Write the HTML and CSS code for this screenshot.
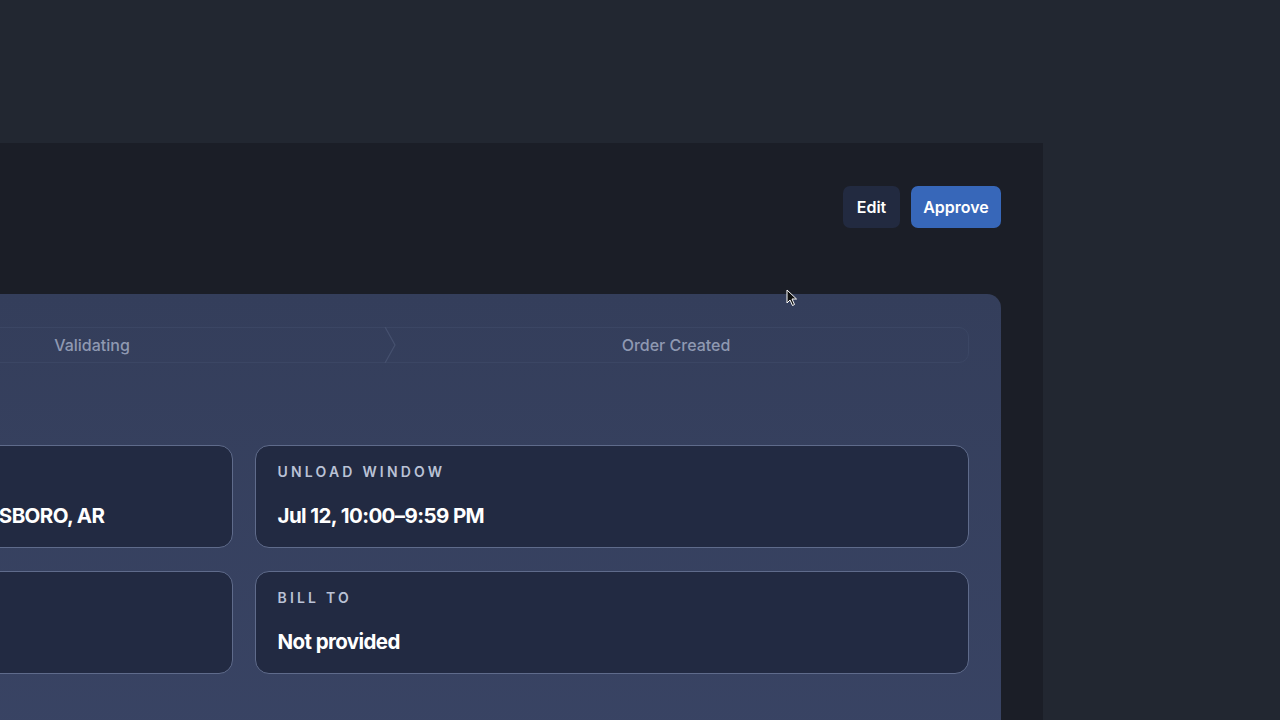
FILE: index.html
```html
<!DOCTYPE html>
<html lang="en">
<head>
    <meta charset="UTF-8">
    <meta name="viewport" content="width=device-width, initial-scale=1.0">
    <title>Order Review</title>
    <link rel="stylesheet" href="styles.css">
</head>
<body>
    <div class="topbar"></div>

    <div class="panel">
        <div class="panel-header">
            <div class="actions">
                <button class="btn btn-edit">Edit</button>
                <button class="btn btn-approve">Approve</button>
            </div>
        </div>

        <div class="card">
            <div class="stepper">
                <div class="step">Received
                    <svg class="chevron" width="12" height="36" viewBox="0 0 12 36"><path d="M1 0 L11 18 L1 36" fill="none" stroke="#46516f" stroke-width="1.2"/></svg>
                </div>
                <div class="step">Validating
                    <svg class="chevron" width="12" height="36" viewBox="0 0 12 36"><path d="M1 0 L11 18 L1 36" fill="none" stroke="#46516f" stroke-width="1.2"/></svg>
                </div>
                <div class="step">Order Created</div>
            </div>

            <div class="tiles">
                <div class="tile">
                    <div class="tile-label">Unload Location</div>
                    <div class="tile-value">KROGER FOODS DISTRIBUTION CENTERS, JONESBORO, AR</div>
                </div>
                <div class="tile">
                    <div class="tile-label">Unload Window</div>
                    <div class="tile-value">Jul 12, 10:00–9:59 PM</div>
                </div>
                <div class="tile">
                    <div class="tile-label">Reference</div>
                    <div class="tile-value"></div>
                </div>
                <div class="tile">
                    <div class="tile-label">Bill To</div>
                    <div class="tile-value">Not provided</div>
                </div>
            </div>
        </div>
    </div>

    <!-- pointer -->
    <svg class="pointer" width="12" height="18" viewBox="0 0 12 18">
        <path d="M1 1 L1 14 L4 11 L6.5 16.5 L8.5 15.5 L6 10 L10.5 10 Z" fill="#111" stroke="#fff" stroke-width="1"/>
    </svg>
</body>
</html>
```

FILE: styles.css
```css
body {
    margin: 0;
    height: 720px;
    overflow: hidden;
    background-color: #222731;
    font-family: Inter, "Noto Sans", sans-serif;
    color: #fff;
    position: relative;
}

.topbar {
    height: 143px;
}

/* main panel runs off the left edge */
.panel {
    box-sizing: border-box;
    width: 1599px;
    margin-left: -556px;
    height: 577px;
    padding: 43px 42px 0 42px;
    background-color: #1b1e27;
}

.panel-header {
    display: flex;
    justify-content: flex-end;
    align-items: center;
}

.actions {
    display: flex;
    gap: 11px;
}

.btn {
    height: 42px;
    border: none;
    border-radius: 7px;
    font-family: Inter, sans-serif;
    font-size: 16px;
    font-weight: 600;
    color: #fff;
    cursor: pointer;
}

.btn-edit {
    width: 57px;
    background-color: #222a40;
}

.btn-approve {
    width: 90px;
    background-color: #3767b9;
}

.card {
    margin-top: 66px;
    padding: 33px 32px 40px 32px;
    border-radius: 14px;
    background: linear-gradient(180deg, #343e5b 0%, #3a4566 100%);
    height: 500px;
}

.stepper {
    display: grid;
    grid-template-columns: 281px 584px 1fr;
    height: 36px;
    box-sizing: border-box;
    border: 1px solid #3b4664;
    border-radius: 10px;
}

.step {
    position: relative;
    display: flex;
    align-items: center;
    justify-content: center;
    font-size: 16px;
    font-weight: 500;
    color: #8f99b2;
}

.chevron {
    position: absolute;
    right: -12px;
    top: -1px;
}

.tiles {
    margin-top: 82px;
    display: grid;
    grid-template-columns: 1fr 1fr;
    column-gap: 22px;
    row-gap: 23px;
}

.tile {
    box-sizing: border-box;
    height: 103px;
    padding: 18px 22px;
    border: 1px solid #5f6b8b;
    border-radius: 14px;
    background-color: #222a42;
    overflow: hidden;
}

.tile-label {
    font-size: 14px;
    line-height: 16px;
    font-weight: 600;
    letter-spacing: 3.2px;
    text-transform: uppercase;
    color: #bac2d6;
}

.tile-value {
    margin-top: 24px;
    font-size: 20.5px;
    line-height: 24px;
    font-weight: 700;
    letter-spacing: -0.6px;
    color: #fff;
    white-space: nowrap;
}

.pointer {
    position: absolute;
    left: 786px;
    top: 289px;
}
```
